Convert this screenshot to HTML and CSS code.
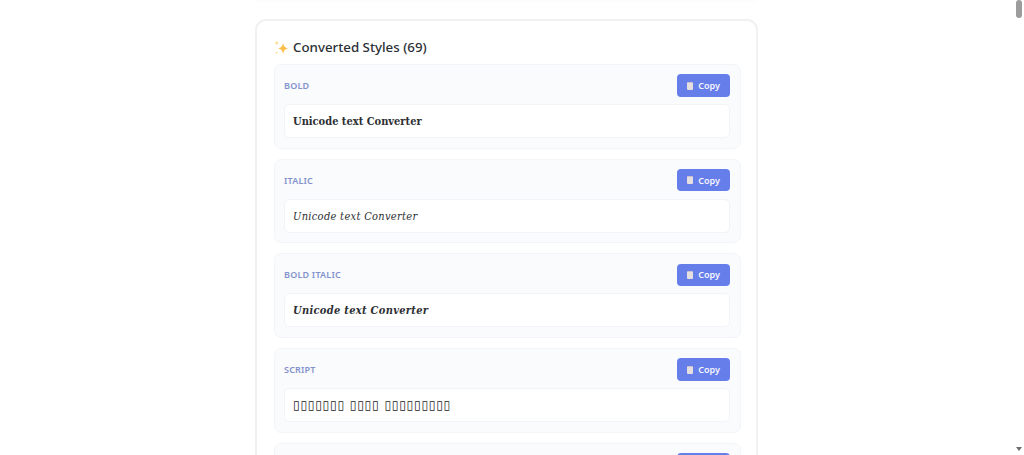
FILE: index.html
```html
<!DOCTYPE html>
<html lang="en">
<head>
<meta charset="utf-8">
<title>Converted Styles</title>
<link rel="stylesheet" href="styles.css">
</head>
<body>
<main class="page">
  <div class="prev-card"></div>
  <section class="card">
    <h2 class="title"><svg class="spark" viewBox="0 0 14 14" width="15" height="15"><path fill="#fbbf4a" d="M8.5 2 C9 6 10 7 14 7.8 C10 8.6 9 9.8 8.5 14 C8 9.8 7 8.6 3 7.8 C7 7 8 6 8.5 2Z"/><path fill="#fcd98a" d="M2.5 0.5 C2.8 2 3.2 2.4 4.6 2.7 C3.2 3 2.8 3.4 2.5 5 C2.2 3.4 1.8 3 0.4 2.7 C1.8 2.4 2.2 2 2.5 0.5Z"/><path fill="#fcd98a" d="M2.5 10.5 C2.7 11.3 3 11.6 3.8 11.8 C3 12 2.7 12.3 2.5 13.2 C2.3 12.3 2 12 1.2 11.8 C2 11.6 2.3 11.3 2.5 10.5Z"/></svg>Converted Styles (69)</h2>
    <div class="list">
      <article class="item">
        <div class="item-head"><span class="label">Bold</span><button class="copy"><span class="clip"></span>Copy</button></div>
        <div class="value bold">Unicode text Converter</div>
      </article>
      <article class="item">
        <div class="item-head"><span class="label">Italic</span><button class="copy"><span class="clip"></span>Copy</button></div>
        <div class="value italic">Unicode text Converter</div>
      </article>
      <article class="item">
        <div class="item-head"><span class="label">Bold Italic</span><button class="copy"><span class="clip"></span>Copy</button></div>
        <div class="value bold italic">Unicode text Converter</div>
      </article>
      <article class="item">
        <div class="item-head"><span class="label">Script</span><button class="copy"><span class="clip"></span>Copy</button></div>
        <div class="value tofu">▯▯▯▯▯▯▯ ▯▯▯▯ ▯▯▯▯▯▯▯▯▯</div>
      </article>
      <article class="item">
        <div class="item-head"><span class="label">Bold Script</span><button class="copy"><span class="clip"></span>Copy</button></div>
        <div class="value tofu">▯▯▯▯▯▯▯ ▯▯▯▯ ▯▯▯▯▯▯▯▯▯</div>
      </article>
    </div>
  </section>
</main>
<div class="scrollbar"><div class="thumb"></div><div class="arrow"></div></div>
</body>
</html>
```
FILE: styles.css
```css
* { box-sizing: border-box; }
html, body { margin: 0; height: 455px; overflow: hidden; background: #fff; }
body { font-family: "Noto Sans", "Open Sans", sans-serif; color: #2d3748; }
.page { width: 503px; margin-left: 255px; }
.prev-card { height: 3px; margin-bottom: 16px; background: #fdfdfd; }
.card {
  border: 2px solid #f0f1f3; border-radius: 11px; padding: 16px 15px 0 17px;
  background: #fff; height: 600px;
}
.title { margin: 0 0 7px; font-size: 13.3px; line-height: 20px; font-weight: 500; color: #2b2f36; display: flex; align-items: center; gap: 4px; }
.spark { flex: none; }
.list { display: flex; flex-direction: column; gap: 10px; }
.item {
  height: 84.67px; padding: 9.3px 10px 9px 9px; background: #f9fbfd;
  border: 1px solid #f3f5f8; border-radius: 7px; display: flex; flex-direction: column; gap: 7.2px;
}
.item-head { display: flex; justify-content: space-between; align-items: center; }
.label { font-size: 9px; font-weight: 600; letter-spacing: .2px; text-transform: uppercase; color: #8492cc; }
.copy {
  width: 53px; height: 22.5px; border: 0; border-radius: 4px; background: #667eea; color: #f4f5ff;
  font: 600 9px "Noto Sans", sans-serif; display: flex; align-items: center; justify-content: center; gap: 5px; padding: 0;
}
.clip { width: 6px; height: 8px; background: #e6dfe0; border-radius: 1px; border-top: 1.5px solid #c9bfd0; }
.value {
  height: 34px; padding: 1px 8px 0; display: flex; align-items: center; background: #fff;
  border: 1px solid #f3f4f7; border-radius: 5px;
  font-family: "DejaVu Serif Condensed", "DejaVu Serif", serif; font-size: 11px; color: #2d2f33;
}
.value.bold { font-weight: 700; }
.value.italic { font-style: italic; letter-spacing: .3px; }
.value.bold.italic { letter-spacing: .3px; }
.value.tofu { font-family: "DejaVu Sans", sans-serif; font-weight: 700; font-size: 12px; letter-spacing: .8px; color: #222; }
.scrollbar { position: fixed; top: 0; right: 0; width: 9px; height: 455px; background: #fff; }
.thumb { position: absolute; top: 0; left: 1px; width: 6px; height: 18px; background: #9c9c9c; border-radius: 3px; }
.arrow {
  position: absolute; top: 447px; left: 1px; width: 0; height: 0;
  border-left: 3.5px solid transparent; border-right: 3.5px solid transparent; border-top: 4px solid #6e6e6e;
}
```
